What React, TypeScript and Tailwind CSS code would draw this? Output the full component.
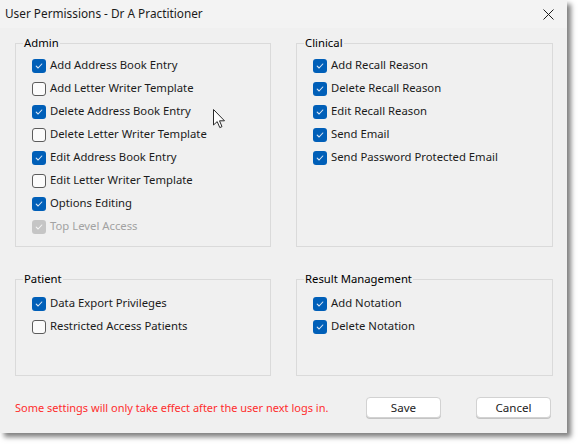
import type { ReactNode } from "react";

type Permission = {
  label: string;
  checked: boolean;
  disabled?: boolean;
};

const admin: Permission[] = [
  { label: "Add Address Book Entry", checked: true },
  { label: "Add Letter Writer Template", checked: false },
  { label: "Delete Address Book Entry", checked: true },
  { label: "Delete Letter Writer Template", checked: false },
  { label: "Edit Address Book Entry", checked: true },
  { label: "Edit Letter Writer Template", checked: false },
  { label: "Options Editing", checked: true },
  { label: "Top Level Access", checked: true, disabled: true },
];

const clinical: Permission[] = [
  { label: "Add Recall Reason", checked: true },
  { label: "Delete Recall Reason", checked: true },
  { label: "Edit Recall Reason", checked: true },
  { label: "Send Email", checked: true },
  { label: "Send Password Protected Email", checked: true },
];

const patient: Permission[] = [
  { label: "Data Export Privileges", checked: true },
  { label: "Restricted Access Patients", checked: false },
];

const results: Permission[] = [
  { label: "Add Notation", checked: true },
  { label: "Delete Notation", checked: true },
];

function CheckBox({ checked, disabled }: { checked: boolean; disabled?: boolean }) {
  if (!checked) {
    return (
      <span className="h-[14px] w-[14px] shrink-0 rounded-[3px] border border-[#5c5c5c] bg-[#fbfbfb]" />
    );
  }
  return (
    <span
      className={`flex h-[14px] w-[14px] shrink-0 items-center justify-center rounded-[3px] ${
        disabled ? "bg-[#c5c5c5]" : "bg-[#005fb8]"
      }`}
    >
      <svg width="10" height="10" viewBox="0 0 10 10" fill="none">
        <path
          d="M2.2 5.2 L4.1 7 L7.8 3"
          stroke={disabled ? "#f4f4f4" : "#dbe7f5"}
          strokeWidth="1.1"
          strokeLinecap="round"
          strokeLinejoin="round"
        />
      </svg>
    </span>
  );
}

function GroupBox({ title, items, className }: { title: string; items: Permission[]; className: string }) {
  return (
    <div className={`relative border border-[#dadada] pl-[16px] ${className}`}>
      <span className="absolute left-[7px] top-[-9px] bg-[#f0f0f0] px-[1px] leading-[16px]">
        {title}
      </span>
      <div className="flex flex-col">
        {items.map((item) => (
          <label key={item.label} className="flex h-[23px] items-center gap-[4px]">
            <CheckBox checked={item.checked} disabled={item.disabled} />
            <span className={item.disabled ? "text-[#a2a2a2]" : "text-[#1b1b1b]"}>{item.label}</span>
          </label>
        ))}
      </div>
    </div>
  );
}

function Button({ children }: { children: ReactNode }) {
  return (
    <button className="flex h-[21px] w-[75px] items-center justify-center rounded-[4px] border border-[#d2d2d2] bg-white text-[11.6px] text-[#1b1b1b] shadow-[0_1px_0_#c4c4c4]">
      {children}
    </button>
  );
}

export default function App() {
  return (
    <div className="h-[445px] w-[579px] bg-white font-['Noto_Sans',sans-serif] text-[11.3px]">
      <div className="relative flex h-[433px] w-[567px] flex-col bg-[#f0f0f0] shadow-[4px_4px_5px_rgba(0,0,0,0.5)]">
        <div className="flex h-[28px] items-center justify-between bg-[#f3f3f3] pl-[5px] pr-[13px]">
          <span className="text-[11.8px] text-[#1b1b1b]">User Permissions - Dr A Practitioner</span>
          <svg width="11" height="11" viewBox="0 0 11 11" className="mt-[1px]">
            <path d="M0.5 0.5 L10.5 10.5 M10.5 0.5 L0.5 10.5" stroke="#1b1b1b" strokeWidth="1" />
          </svg>
        </div>

        <div className="grid grid-cols-[256px_257px] gap-x-[25px] gap-y-[32px] pl-[15px] pt-[15px]">
          <GroupBox title="Admin" items={admin} className="h-[204px] pt-[10px]" />
          <GroupBox title="Clinical" items={clinical} className="h-[204px] pt-[10px]" />
          <GroupBox title="Patient" items={patient} className="h-[97px] pt-[12px]" />
          <GroupBox title="Result Management" items={results} className="h-[97px] pt-[12px]" />
        </div>

        <div className="mt-[21px] flex items-center pl-[15px] pr-[16px]">
          <span className="mt-[2px] flex-1 text-[11px] text-[#ff2d2d]">
            Some settings will only take effect after the user next logs in.
          </span>
          <div className="flex gap-[35px]">
            <Button>Save</Button>
            <Button>Cancel</Button>
          </div>
        </div>

        {/* mouse pointer resting over the admin list */}
        <svg
          width="14"
          height="21"
          viewBox="0 0 14 21"
          className="absolute left-[213px] top-[109px]"
        >
          <path
            d="M0.5 0.5 L0.5 16 L4.2 12.6 L6.8 18.6 L9 17.6 L6.5 11.8 L11.5 11.8 Z"
            fill="#ffffff"
            stroke="#2a2a2a"
            strokeWidth="1"
            strokeLinejoin="round"
          />
        </svg>
      </div>
    </div>
  );
}
